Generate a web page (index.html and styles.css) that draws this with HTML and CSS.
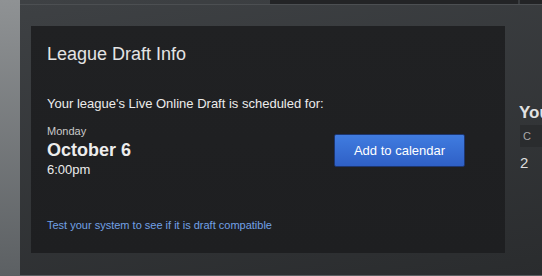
FILE: index.html
```html
<!DOCTYPE html>
<html lang="en">
<head>
    <meta charset="UTF-8">
    <meta name="viewport" content="width=device-width, initial-scale=1.0">
    <title>League Draft Info</title>
    <link rel="stylesheet" href="styles.css">
</head>
<body>
<div class="strip"></div>

<div class="main">
    <!-- Top tabs -->
    <div class="topbar">
        <div class="topbar-spacer"></div>
        <div class="topbar-tab"></div>
        <div class="topbar-tab topbar-tab-last"></div>
    </div>

    <div class="content">
        <!-- Draft info card -->
        <div class="card">
            <h2 class="card-title">League Draft Info</h2>
            <p class="card-intro">Your league's Live Online Draft is scheduled for:</p>

            <div class="schedule">
                <div class="date">
                    <div class="date-day">Monday</div>
                    <div class="date-main">October 6</div>
                    <div class="date-time">6:00pm</div>
                </div>
                <button type="button" class="btn-calendar">Add to calendar</button>
            </div>

            <a href="#" class="test-link">Test your system to see if it is draft compatible</a>
        </div>

        <!-- Right column -->
        <div class="aside">
            <h3 class="aside-title">You</h3>
            <div class="aside-head">C</div>
            <div class="aside-value">2</div>
        </div>
    </div>
</div>
</body>
</html>
```

FILE: styles.css
```css
body {
    margin: 0;
    height: 276px;
    display: flex;
    overflow: hidden;
    font-family: "Liberation Sans", Arial, sans-serif;
    background: #2a2c2e;
}

.strip {
    width: 20px;
    flex-shrink: 0;
    background: linear-gradient(#8f9294, #5c6063);
}

.main {
    flex: 1;
    min-width: 0;
    height: 275px;
    border-bottom: 1px solid #5a5d60;
    background: linear-gradient(170deg, #3e4144, #2a2c2e);
    display: flex;
    flex-direction: column;
}

/* Top tabs */
.topbar {
    height: 4px;
    display: flex;
    border-bottom: 1px solid #4c4f52;
}

.topbar-spacer {
    width: 250px;
}

.topbar-tab {
    width: 248px;
    background: #232426;
}

.topbar-tab-last {
    flex: 1;
    margin-left: 2px;
}

.content {
    display: flex;
    gap: 14px;
    padding: 21px 0 0 11px;
    min-width: 0;
}

/* Card */
.card {
    width: 474px;
    height: 227px;
    flex-shrink: 0;
    box-sizing: border-box;
    padding: 18px 16px 0 16px;
    background: linear-gradient(#202123, #1e1f21);
    display: flex;
    flex-direction: column;
    align-items: flex-start;
}

.card-title {
    margin: 0;
    font-size: 18px;
    line-height: 21px;
    font-weight: normal;
    color: #e4e4e4;
}

.card-intro {
    margin: 31px 0 0 0;
    font-size: 13px;
    line-height: 16px;
    color: #ececec;
}

.schedule {
    margin-top: 13px;
    align-self: stretch;
    display: flex;
    align-items: center;
    justify-content: space-between;
    padding-right: 24px;
}

.date-day {
    font-size: 11px;
    line-height: 13px;
    color: #c9c9c9;
}

.date-main {
    margin-top: 2px;
    font-size: 18px;
    line-height: 21px;
    font-weight: bold;
    color: #ececec;
}

.date-time {
    margin-top: 1px;
    font-size: 13px;
    line-height: 16px;
    color: #ececec;
}

.btn-calendar {
    width: 131px;
    height: 33px;
    margin-top: -3px;
    border: 1px solid #1d3670;
    border-radius: 2px;
    background: linear-gradient(#407ce0, #2f60c6);
    color: #fff;
    font-family: "Liberation Sans", Arial, sans-serif;
    font-size: 13px;
    padding: 0;
}

.test-link {
    margin-top: 41px;
    font-size: 11px;
    line-height: 13px;
    color: #72a1e6;
    text-decoration: none;
}

/* Right column */
.aside {
    flex: 1;
    min-width: 0;
    padding-top: 77px;
    white-space: nowrap;
}

.aside-title {
    margin: 0;
    font-size: 17px;
    line-height: 20px;
    font-weight: bold;
    color: #e2e2e2;
}

.aside-head {
    margin: 2px 0 0 1px;
    height: 22px;
    line-height: 22px;
    padding-left: 3px;
    font-size: 11px;
    color: #a9a9a9;
    background: #2a2c2e;
}

.aside-value {
    margin: 7px 0 0 1px;
    font-size: 15px;
    line-height: 18px;
    color: #dedede;
}
```
